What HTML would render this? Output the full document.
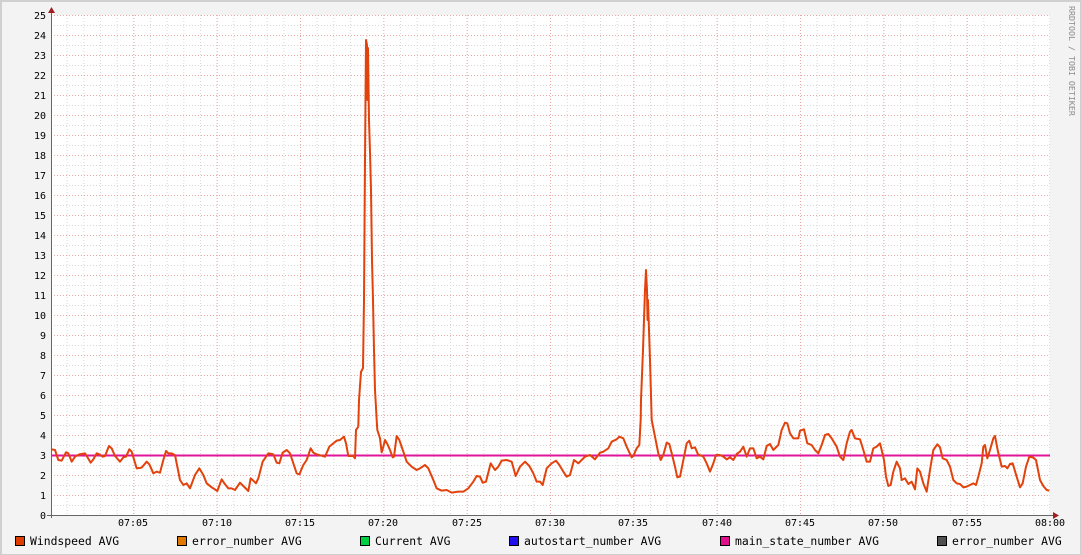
<!DOCTYPE html>
<html><head><meta charset="utf-8"><style>
html,body{margin:0;padding:0;background:#f3f3f3;}
svg{display:block}
text{font-family:"DejaVu Sans Mono","Liberation Mono",monospace;font-size:10px;fill:#000}
.lg{font-size:11.4px}
</style></head><body>
<svg width="1081" height="555" viewBox="0 0 1081 555" xmlns="http://www.w3.org/2000/svg">
<defs>
<pattern id="vmin" patternUnits="userSpaceOnUse" x="50" y="0" width="16.6667" height="3">
<rect x="0" y="0" width="1" height="1" fill="#d8d8d8"/>
</pattern>
<pattern id="hmin" patternUnits="userSpaceOnUse" x="0" y="5" width="3" height="10">
<rect x="0" y="0" width="1" height="1" fill="#d8d8d8"/>
</pattern>
<pattern id="vmaj" patternUnits="userSpaceOnUse" x="50" y="0" width="83.3333" height="3">
<rect x="0" y="0" width="1" height="1" fill="#e8a8a8"/>
</pattern>
<pattern id="hmaj" patternUnits="userSpaceOnUse" x="0" y="15" width="3" height="20">
<rect x="0" y="0" width="1" height="1" fill="#e8a8a8"/>
</pattern>
</defs>
<rect x="0" y="0" width="1081" height="555" fill="#f3f3f3"/>
<rect x="0.5" y="0.5" width="1080" height="554" fill="none" stroke="#cfcfcf"/>
<rect x="0" y="0" width="1081" height="2" fill="#d0d0d0"/>
<rect x="0" y="0" width="2" height="555" fill="#d0d0d0"/>
<rect x="51" y="15" width="999" height="500" fill="#fff"/>
<rect x="52" y="15" width="998" height="500" fill="url(#vmin)"/>
<rect x="51" y="15" width="999" height="500" fill="url(#hmin)"/>
<rect x="52" y="15" width="998" height="500" fill="url(#vmaj)"/>
<rect x="51" y="15" width="999" height="500" fill="url(#hmaj)"/>

<line x1="51.5" y1="12" x2="51.5" y2="518" stroke="#666" stroke-width="1"/>
<line x1="47" y1="515.5" x2="1054" y2="515.5" stroke="#666" stroke-width="1"/>
<polygon points="48,13 55,13 51.5,7" fill="#a02020"/>
<polygon points="1053,512 1053,519 1059,515.5" fill="#a02020"/>

<g text-anchor="end">
<text x="46" y="19">25</text><text x="46" y="39">24</text><text x="46" y="59">23</text><text x="46" y="79">22</text><text x="46" y="99">21</text><text x="46" y="119">20</text><text x="46" y="139">19</text><text x="46" y="159">18</text><text x="46" y="179">17</text><text x="46" y="199">16</text><text x="46" y="219">15</text><text x="46" y="239">14</text><text x="46" y="259">13</text><text x="46" y="279">12</text><text x="46" y="299">11</text><text x="46" y="319">10</text><text x="46" y="339">9</text><text x="46" y="359">8</text><text x="46" y="379">7</text><text x="46" y="399">6</text><text x="46" y="419">5</text><text x="46" y="439">4</text><text x="46" y="459">3</text><text x="46" y="479">2</text><text x="46" y="499">1</text><text x="46" y="519">0</text>
</g>
<g text-anchor="middle">
<text x="133" y="526">07:05</text><text x="217" y="526">07:10</text><text x="300" y="526">07:15</text><text x="383" y="526">07:20</text><text x="467" y="526">07:25</text><text x="550" y="526">07:30</text><text x="633" y="526">07:35</text><text x="717" y="526">07:40</text><text x="800" y="526">07:45</text><text x="883" y="526">07:50</text><text x="967" y="526">07:55</text><text x="1050" y="526">08:00</text>
</g>

<line x1="52" y1="455.5" x2="1050" y2="455.5" stroke="#e0149a" stroke-width="2"/>

<g fill="none" stroke="#e2420c" stroke-width="2" stroke-linejoin="round">
<g transform="translate(40,420) scale(0.33333)" stroke-width="6">
<polyline points="35,88 45,90 55,120 65,122 78,97 85,100 95,125 105,110 118,103 135,100 140,108 152,128 160,118 170,100 178,103 188,110 195,108 207,78 215,85 225,108 240,125 250,112 258,110 268,88 275,95 290,145 305,143 320,125 328,133 340,160 350,155 360,158 370,120 378,93 385,100 395,100 405,105 420,180 430,195 440,190 450,205 465,165 478,145 490,165 500,190 515,202 532,213 545,178 553,190 565,205 575,205 585,210 600,188 610,198 625,213 632,175 640,182 648,190 655,175 668,125 685,100 695,102 700,103 710,128 718,130 728,98 740,90 750,100 770,160 778,163 790,135 800,120 812,85 820,98 830,103 845,107 855,110 868,80 880,70 890,62 900,60 912,50 918,70 925,108 940,108 945,115 948,30 955,20"/>
</g>
<polyline points="358.3,426.7 359,400 361,372 363,368 364,300 365,160 366,40 367,45 367.5,100 368,48 369,120 370,152 371,190 372,260 373,300 374,350 375,390 376.7,420"/>
<g transform="translate(370,420) scale(0.33333)" stroke-width="6">
<polyline points="20,0 22,30 30,55 35,97 40,80 45,60 52,72 60,90 68,112 72,110 80,48 88,60 100,95 110,125 125,140 140,150 150,145 165,135 175,145 190,180 200,205 215,212 230,210 245,218 265,215 280,215 295,205 310,185 320,168 330,170 338,188 348,185 362,130 375,150 385,140 395,122 410,120 425,125 437,168 450,140 465,125 478,138 490,160 500,185 510,185 518,195 530,145 545,130 558,122 568,135 580,155 590,170 600,165 612,120 625,130 635,120 645,110 660,105 675,118 690,98 700,95 715,85 725,65 740,58 748,50 760,55 770,80 785,112 790,108 800,85 808,75 812,0"/>
</g>
<polyline points="640.7,420 641,400 643,350 644,320 645,290 646,270 647,290 647.5,320 648,300 649,330 650,360 651.7,420 655,436.7 658.3,453.3 660.7,460 663.3,455 666.7,442.7 669.3,444 671.7,453.3 675,466.7 677.3,477.3 680,476.7 682.7,463.3 686.7,443.3 689.3,440.7 691.7,448.3 695,447.3 698.3,455 700,455"/>
<g transform="translate(700,410) scale(0.33333)" stroke-width="6">
<polyline points="0,135 10,140 20,160 30,185 40,160 48,135 60,135 70,140 80,148 90,142 100,150 110,132 120,125 130,110 140,140 150,115 160,115 170,145 180,140 190,148 200,108 210,102 220,120 235,105 245,60 255,38 262,40 270,70 280,85 295,85 300,62 312,58 322,100 335,105 345,120 355,130 365,105 375,75 385,72 395,85 410,110 420,140 430,150 440,100 450,65 455,60 465,85 480,88 490,120 500,155 510,155 520,115 530,110 540,100 545,120 552,150 558,200 565,228 572,225 580,185 590,155 600,175 605,210 615,205 625,222 635,215 645,238 652,175 660,185 670,220 680,245 690,180 700,120 712,103 720,112 728,145 740,150 750,170 760,210 770,220 780,222 790,232 800,230 810,225 820,220 828,225 835,200 845,160 850,110 855,105 862,145 870,120 880,85 885,78 893,120 905,170 915,168 922,175 930,162 938,160 950,200 960,232 968,220 978,170 988,140 1000,143 1008,150 1020,210 1030,228 1040,240 1048,242"/>
</g>
</g>

<text transform="translate(1069,6) rotate(90)" style="font-size:8.3px;fill:#8a8a8a">RRDTOOL / TOBI OETIKER</text>

<g stroke="#000" stroke-width="1">
<rect x="15.5" y="536.5" width="9" height="9" fill="#e03c00"/>
<rect x="177.5" y="536.5" width="9" height="9" fill="#e07800"/>
<rect x="360.5" y="536.5" width="9" height="9" fill="#00d040"/>
<rect x="509.5" y="536.5" width="9" height="9" fill="#2010f0"/>
<rect x="720.5" y="536.5" width="9" height="9" fill="#e0108c"/>
<rect x="937.5" y="536.5" width="9" height="9" fill="#505050"/>
</g>
<text class="lg" x="30" y="545">Windspeed AVG</text>
<text class="lg" x="192" y="545">error_number AVG</text>
<text class="lg" x="375" y="545">Current AVG</text>
<text class="lg" x="524" y="545">autostart_number AVG</text>
<text class="lg" x="735" y="545">main_state_number AVG</text>
<text class="lg" x="952" y="545">error_number AVG</text>
</svg>
</body></html>
